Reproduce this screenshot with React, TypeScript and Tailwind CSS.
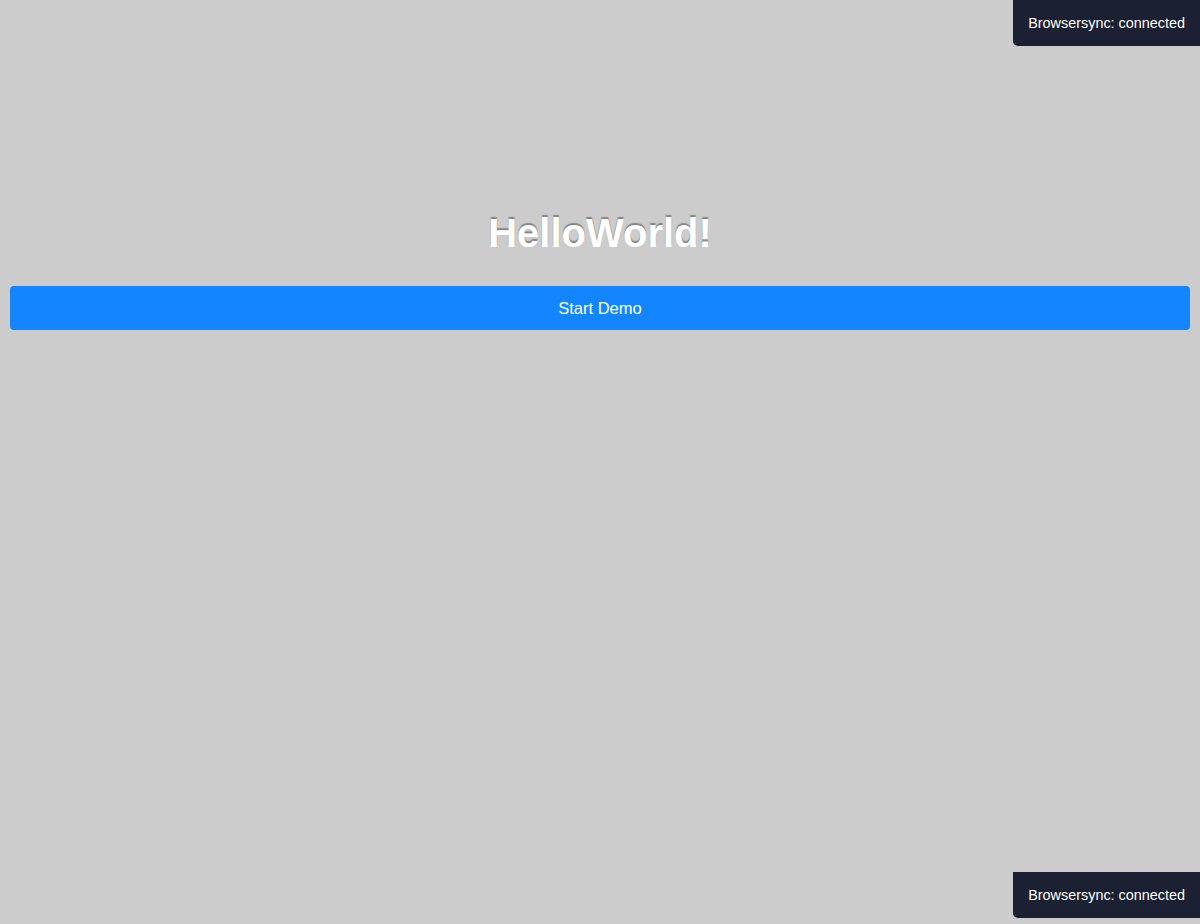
export default function App() {
  return (
    <div className="relative min-h-[924px] w-full bg-[#cccccc] font-['Liberation_Sans',Arial,sans-serif]">
      <main className="flex flex-col items-center px-[10px] pt-[209px]">
        <h1 className="text-[40px] font-bold leading-[48px] text-white [text-shadow:0_-2px_1px_rgba(0,0,0,0.35)]">
          HelloWorld!
        </h1>
        <button className="mt-[29px] h-[44px] w-full rounded-[4px] bg-[#1285ff] text-[16.5px] text-white">
          Start Demo
        </button>
      </main>

      <Notice className="top-0" />
      <Notice className="top-[872px]" />
    </div>
  );
}

function Notice({ className }: { className: string }) {
  return (
    <div
      className={`absolute right-0 rounded-bl-[5px] bg-[#1b2032] px-[15px] py-[15px] text-[14.4px] leading-[16px] text-white ${className}`}
    >
      Browsersync: connected
    </div>
  );
}
